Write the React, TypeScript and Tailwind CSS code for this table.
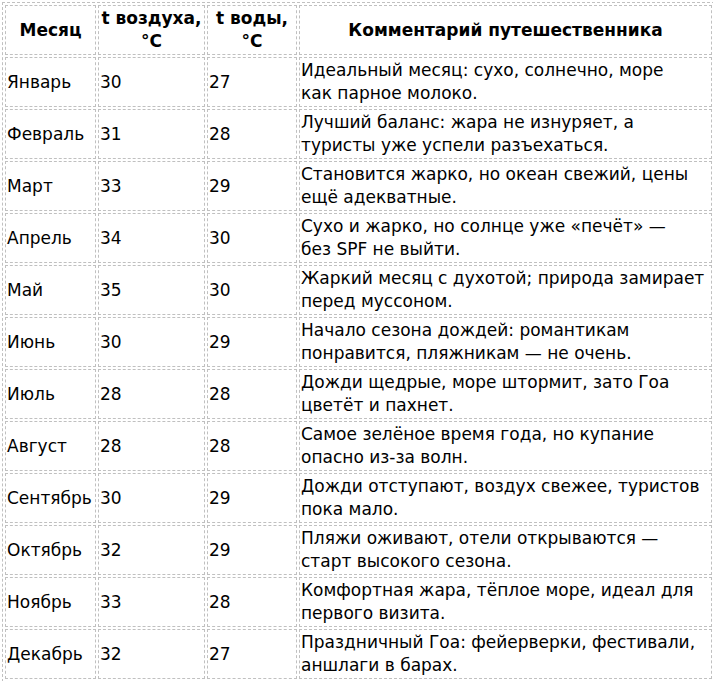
const rows: [string, string, string, string[]][] = [
  ['Январь', '30', '27', ['Идеальный месяц: сухо, солнечно, море', 'как парное молоко.']],
  ['Февраль', '31', '28', ['Лучший баланс: жара не изнуряет, а', 'туристы уже успели разъехаться.']],
  ['Март', '33', '29', ['Становится жарко, но океан свежий, цены', 'ещё адекватные.']],
  ['Апрель', '34', '30', ['Сухо и жарко, но солнце уже «печёт» —', 'без SPF не выйти.']],
  ['Май', '35', '30', ['Жаркий месяц с духотой; природа замирает', 'перед муссоном.']],
  ['Июнь', '30', '29', ['Начало сезона дождей: романтикам', 'понравится, пляжникам — не очень.']],
  ['Июль', '28', '28', ['Дожди щедрые, море штормит, зато Гоа', 'цветёт и пахнет.']],
  ['Август', '28', '28', ['Самое зелёное время года, но купание', 'опасно из-за волн.']],
  ['Сентябрь', '30', '29', ['Дожди отступают, воздух свежее, туристов', 'пока мало.']],
  ['Октябрь', '32', '29', ['Пляжи оживают, отели открываются —', 'старт высокого сезона.']],
  ['Ноябрь', '33', '28', ['Комфортная жара, тёплое море, идеал для', 'первого визита.']],
  ['Декабрь', '32', '27', ['Праздничный Гоа: фейерверки, фестивали,', 'аншлаги в барах.']],
];

const cell = 'border border-dashed border-[#c0c0c0] p-[1px] align-middle';

export default function App() {
  return (
    <div className="w-[713px] h-[681px] overflow-hidden bg-white text-black font-['DejaVu_Sans',Verdana,sans-serif] text-[17px] leading-[23px]">
      <table className="ml-[2px] mt-[2px] w-[713px] table-fixed border-separate border-spacing-[2px] border border-dashed border-[#c0c0c0]">
        <colgroup>
          <col className="w-[91px]" />
          <col className="w-[107px]" />
          <col className="w-[90px]" />
          <col />
        </colgroup>
        <thead>
          <tr className="h-[50px]">
            <th className={`${cell} text-center font-bold`}>Месяц</th>
            <th className={`${cell} text-center font-bold`}>t воздуха, °C</th>
            <th className={`${cell} text-center font-bold`}>t воды, °C</th>
            <th className={`${cell} text-center font-bold`}>Комментарий путешественника</th>
          </tr>
        </thead>
        <tbody>
          {rows.map(([m, a, w, c]) => (
            <tr key={m} className="h-[50px]">
              <td className={`${cell} text-left`}>{m}</td>
              <td className={`${cell} text-left`}>{a}</td>
              <td className={`${cell} text-left`}>{w}</td>
              <td className={`${cell} text-left whitespace-nowrap`}>
                {c[0]}
                <br />
                {c[1]}
              </td>
            </tr>
          ))}
        </tbody>
      </table>
    </div>
  );
}
